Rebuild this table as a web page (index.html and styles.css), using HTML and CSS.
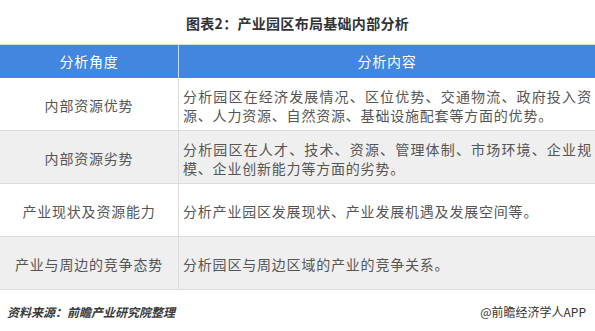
FILE: index.html
```html
<!DOCTYPE html>
<html lang="zh">
<head>
<meta charset="utf-8">
<link rel="stylesheet" href="styles.css">
</head>
<body>
<div class="page">
  <h1 class="title">图表2：产业园区布局基础内部分析</h1>
  <table class="grid">
    <thead>
      <tr><th class="col-a">分析角度</th><th class="col-b">分析内容</th></tr>
    </thead>
    <tbody>
      <tr><td class="col-a">内部资源优势</td><td class="col-b">分析园区在经济发展情况、区位优势、交通物流、政府投入资源、人力资源、自然资源、基础设施配套等方面的优势。</td></tr>
      <tr class="alt"><td class="col-a">内部资源劣势</td><td class="col-b">分析园区在人才、技术、资源、管理体制、市场环境、企业规模、企业创新能力等方面的劣势。</td></tr>
      <tr><td class="col-a">产业现状及资源能力</td><td class="col-b">分析产业园区发展现状、产业发展机遇及发展空间等。</td></tr>
      <tr class="alt"><td class="col-a">产业与周边的竞争态势</td><td class="col-b">分析园区与周边区域的产业的竞争关系。</td></tr>
    </tbody>
  </table>
  <div class="foot">
    <span class="source">资料来源：前瞻产业研究院整理</span>
    <span class="brand">@前瞻经济学人APP</span>
  </div>
</div>
</body>
</html>
```

FILE: styles.css
```css
html, body {
  margin: 0;
  padding: 0;
  background: #fff;
}
body {
  font-family: "Noto Sans CJK SC", "Noto Sans", sans-serif;
  color: #555;
}
.page {
  width: 595px;
}
.title {
  margin: 0;
  height: 44px;
  line-height: 46px;
  text-align: center;
  font-size: 14px;
  font-weight: bold;
  color: #333;
  letter-spacing: 0.3px;
}
.grid {
  width: 595px;
  border-collapse: collapse;
  table-layout: fixed;
  border-top: 1px solid #dcdcdc;
}
.grid .col-a {
  width: 178px;
  text-align: center;
  border-right: 1px solid #dcdcdc;
}
.grid th {
  background: #4286e0;
  color: #fff;
  font-weight: normal;
  font-size: 14px;
  letter-spacing: 0.8px;
  height: 33px;
  line-height: 19px;
  padding: 0;
}
.grid th.col-a {
  border-right: 1px solid #c9dcf5;
}
.grid td {
  height: 49px;
  padding: 3px 3px 0 4px;
  font-size: 14px;
  letter-spacing: 0.8px;
  line-height: 19px;
  border-bottom: 1px solid #dcdcdc;
  vertical-align: middle;
}
.grid td.col-b {
  text-align: justify;
}
.grid td.col-a {
  padding: 3px 0 0 0;
}
.grid tr.alt td {
  background: #efefef;
}
.foot {
  display: flex;
  justify-content: space-between;
  padding: 13px 9px 0 7px;
  font-size: 12px;
  line-height: 17px;
  color: #333;
}
.source {
  font-style: italic;
  font-weight: bold;
  color: #3a3a3a;
}
```
